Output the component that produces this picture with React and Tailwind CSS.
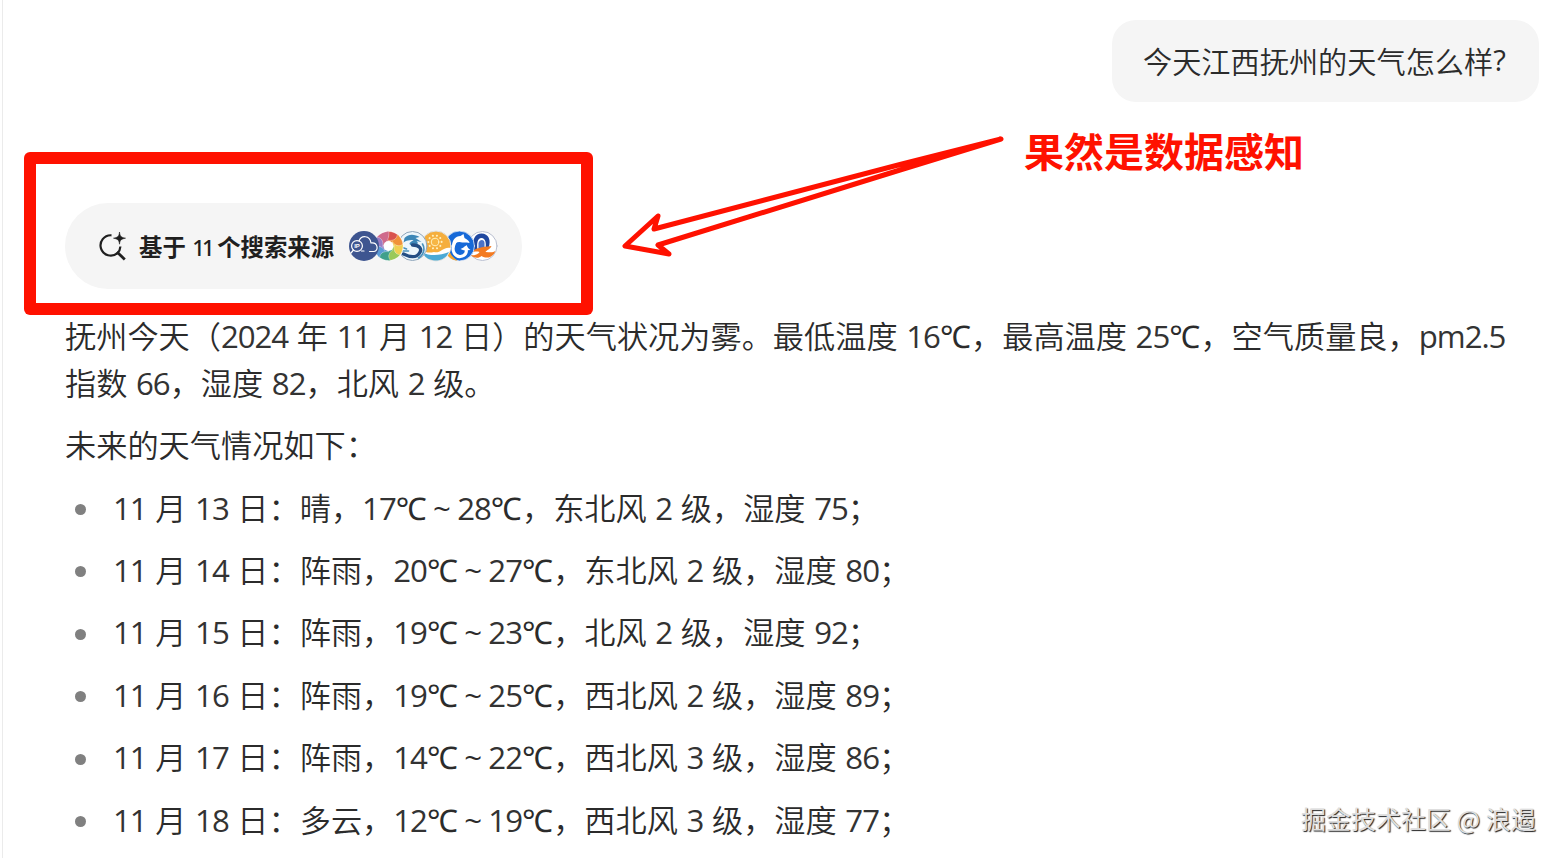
const forecast = [
  "11 月 13 日：晴，17℃~28℃，东北风 2 级，湿度 75；",
  "11 月 14 日：阵雨，20℃~27℃，东北风 2 级，湿度 80；",
  "11 月 15 日：阵雨，19℃~23℃，北风 2 级，湿度 92；",
  "11 月 16 日：阵雨，19℃~25℃，西北风 2 级，湿度 89；",
  "11 月 17 日：阵雨，14℃~22℃，西北风 3 级，湿度 86；",
  "11 月 18 日：多云，12℃~19℃，西北风 3 级，湿度 77；",
];

// Latin runs, the range tilde and the degree sign get their own metrics inside Chinese text.
function Mixed({ text }) {
  return text.split(/(~|℃|[ -}]+)/).map((part, i) => {
    if (part === "~") {
      return (
        <span key={i} className="inline-block w-[0.97em] text-center leading-none font-normal font-['Open_Sans',sans-serif]">~</span>
      );
    }
    if (part === "℃") {
      return (
        <span key={i} className="inline-flex w-[1em] justify-center leading-none font-normal font-['Noto_Sans','Noto_Sans_CJK_SC',sans-serif]">℃</span>
      );
    }
    if (/^[ -}]+$/.test(part)) {
      return (
        <span key={i} className="leading-none font-normal text-[#333] font-['Open_Sans',sans-serif] tracking-[-0.033em] [word-spacing:0.050em]">{part}</span>
      );
    }
    return part;
  });
}

function SearchIcon() {
  return (
    <svg className="h-[30px] w-[30px] shrink-0" viewBox="0 0 30 30" fill="none" stroke="#1f1f1f">
      <path d="M13.500 4.300A10.200 10.200 0 1 0 19.400 22.200A10.200 10.200 0 0 0 22.400 15.500" strokeWidth="2.2" />
      <path d="M19 21L26.800 28.400" strokeWidth="2.800" />
      <path d="M21.500 1C22 5.400 23.100 6.400 27.500 7.200C23.100 8 22 9 21.500 13.200C21 9 19.900 8 15.500 7.200C19.900 6.400 21 5.400 21.500 1Z" fill="#1f1f1f" strokeWidth="0.600" />
    </svg>
  );
}

const swirl = ["#d9534f", "#f0923a", "#f0cf52", "#9ac95a", "#3fa08c", "#5a9bd6", "#9a7cc4", "#cf6a8c"];

function Sources() {
  return (
    <svg className="h-8 w-[150px] shrink-0" viewBox="0 0 150 32" fill="none" strokeLinecap="round" strokeLinejoin="round">
      {/* orange wave under a blue arch */}
      <g transform="translate(134.500 16)">
        <circle r="14.500" fill="#fff" stroke="#b9bfd0" />
        <path d="M-9 4C-11-7-7-12.500-1-12.500C6-12.500 9-6 6 2L3 3C4-3 3-8-1-8C-5-8-6-3-5 4Z" fill="#2048a0" />
        <path d="M-4-3C-3-7 2-7 2-3V3H-4Z" fill="#4b72c8" />
        <path d="M-11 6C-7 2-1 1 9 0C8 3 4 4 3 6C7 6 10 7 13 5C10 12 4 13-1 10C-4 13-9 12-12 9C-8 10-4 8-3 6C-6 5-9 6-11 6Z" fill="#f37a20" />
      </g>
      {/* white dolphin */}
      <g transform="translate(111.500 16)">
        <circle r="15" fill="#1669d8" stroke="#e9eef6" strokeWidth="0.800" />
        <path d="M-14 4C-13 10-8 14.500-2 14.500C-7 11-10 8-10 3Z" fill="#f5a52c" />
        <path d="M-5-3C-9 5-4 11 1 10.500C6 10 8 6 6 2" stroke="#fff" strokeWidth="3.200" />
        <path d="M-7 1C-8-6-4-10 1-10L4-12L5-8C8-6 10-5 10-3C6-4 4-3 0-4C-3-4-5-2-7 1ZM1 3C4 2 6 0 7-1C8 1 9 3 11 4C7 4 4 5 1 3Z" fill="#fff" />
      </g>
      {/* sun over sea */}
      <g transform="translate(88 16)">
        <circle r="15" fill="#f5ae3d" stroke="#dfe3e6" />
        <path d="M-14.500 4C-10 7-6 7-2 6C4 8 8 0 14.500 2C14 9 8 14.500 0 14.500C-7 14.500-13 10-14.500 4Z" fill="#fff" />
        <path d="M-13.500 6.500C-7 10 4 10 13 6C11 11 6 14.500 0 14.500C-6 14.500-11 12-13.500 6.500Z" fill="#4ba9d5" />
        <circle cx="-1" cy="-4" r="3.800" fill="#f7b645" stroke="#fff1bf" />
        <circle cx="-1" cy="-4" r="6.600" stroke="#fff1bf" strokeWidth="2" strokeDasharray="0.100 4" />
      </g>
      {/* blue dragon */}
      <g transform="translate(64.500 16)">
        <circle r="14.500" fill="#edf6fb" stroke="#8fa5ba" />
        <path d="M-8-8C-3-13 3-11 7-9L3-8L9-4L4-5C8-2 2 0-2-1C-5-3 0-5 1-6C-5-6-8-5-9-3Z" fill="#3d87b7" />
        <path d="M0-1C7-1 10 3 7 7C4 12-3 11-9 8" stroke="#244e83" strokeWidth="3.400" />
        <path d="M-11 1L-6 3M-10 5L-4 5M10-2C13 3 11 9 6 12" stroke="#4891bc" strokeWidth="1.600" />
      </g>
      {/* rainbow swirl */}
      <g transform="translate(40.500 16)">
        <circle r="15" fill="#fff" />
        {swirl.map((color, i) => (
          <path key={color} d="M-4-4C0-7 1-11-2-14.500C3-15 8-13 10.500-10C7-6 2-3-4-4Z" fill={color} stroke="#fff" strokeWidth="0.300" transform={`rotate(${i * 45})`} />
        ))}
        <circle r="5" fill="#fff" />
      </g>
      {/* cloud with IP lens */}
      <g transform="translate(16 16)">
        <circle r="15" fill="#3e5590" />
        <path d="M-5-5C-3-11 6-11 7-3C14-4 15 5 10 5.500H5.500M-2.500 5H0" stroke="#fff" strokeWidth="1.200" />
        <circle cx="-7" cy="0" r="5.400" stroke="#fff" strokeWidth="1.200" />
        <path d="M-10.500 4L-13 7" stroke="#fff" strokeWidth="1.200" />
        <text x="-9.800" y="2.300" fill="#fff" fontSize="6" fontWeight="700" fontFamily="Liberation Sans, sans-serif">IP</text>
      </g>
    </svg>
  );
}

export default function App() {
  return (
    <div className="relative h-[858px] w-[1560px] overflow-hidden bg-white pl-[2px] text-[#2b2b2b] font-['Noto_Sans_CJK_SC',sans-serif]">
      <main className="flex h-full flex-col border-l border-[#ebebeb] pl-[62px]">
        <div className="mt-5 mr-[21px] flex h-[82px] w-[427px] shrink-0 items-center self-end rounded-3xl bg-[#f5f5f5] pl-[31px] text-[29.2px] font-[350] whitespace-nowrap">
          今天江西抚州的天气怎么样<span className="font-normal font-['Open_Sans',sans-serif]">?</span>
        </div>

        <div className="mt-[101px] flex h-[86px] w-[457px] shrink-0 items-center rounded-full bg-[#f5f5f5] pl-[33px]">
          <SearchIcon />
          <span className="mt-[2px] ml-[11px] w-[209px] text-[23.4px] font-bold whitespace-nowrap text-[#1f1f1f]">
            基于<span className="mx-[6.400px] inline-block w-[18.600px] font-['Noto_Sans',sans-serif] text-[22px] leading-none font-medium tracking-[-0.13em]">11</span>个搜索来源
          </span>
          <Sources />
        </div>

        <article className="mt-[23px] flex flex-col gap-[15.600px] text-[31.2px] leading-[46.800px] font-[350] whitespace-nowrap">
          <p>
            <Mixed text="抚州今天（2024 年 11 月 12 日）的天气状况为雾。最低温度 16℃，最高温度 25℃，空气质量良，pm2.5" />
            <br />
            <Mixed text="指数 66，湿度 82，北风 2 级。" />
          </p>
          <p>未来的天气情况如下：</p>
          <ul className="flex flex-col gap-[15.600px]">
            {forecast.map((line) => (
              <li key={line} className="flex h-[46.800px] items-center pl-[10px]">
                <span className="mt-[5px] mr-[27px] h-[11px] w-[11px] rounded-full bg-[#808080]" />
                <span><Mixed text={line} /></span>
              </li>
            ))}
          </ul>
        </article>
      </main>

      <div className="absolute top-[152px] left-[24px] h-[163px] w-[569px] rounded-[6px] bg-transparent ring-12 ring-[#ff1100] ring-inset" />
      <svg className="absolute top-[120px] left-[600px] h-[150px] w-[420px]" viewBox="0 0 420 150" fill="none" stroke="#ff1100" strokeWidth="5" strokeLinecap="round" strokeLinejoin="round">
        <path d="M401 19L300 44.500L54 109L58 96L25 126L69 134L58 125L300 50Z" />
      </svg>
      <p className="absolute top-[120px] left-[1024px] text-[40px] leading-[60px] font-bold whitespace-nowrap text-[#ff1100]">果然是数据感知</p>
      <p className="absolute top-[800px] left-[1301px] text-[25px] leading-[36px] whitespace-nowrap text-[#dedede] [text-shadow:1px_1px_1px_#222]">掘金技术社区 @ 浪遏</p>
    </div>
  );
}
